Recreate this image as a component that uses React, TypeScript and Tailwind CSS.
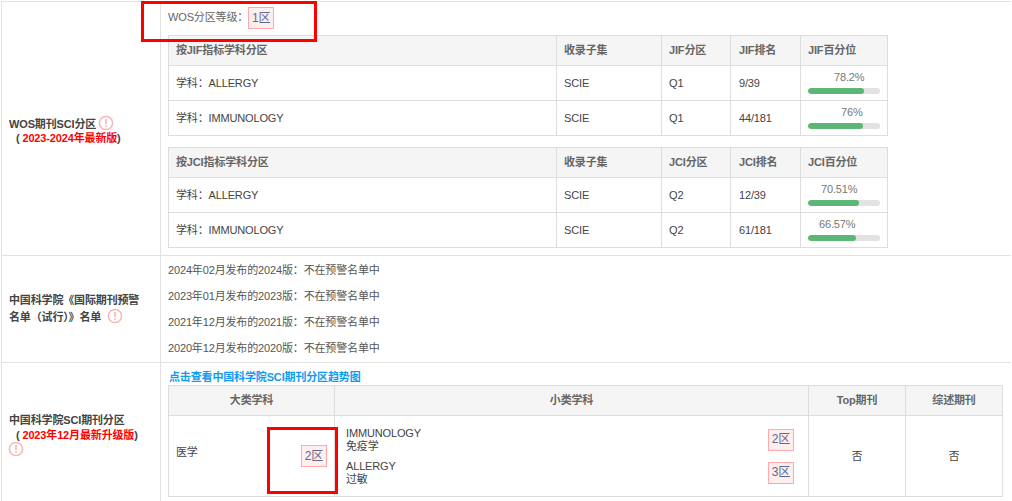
const font = "font-['Liberation_Sans','Noto_Sans_CJK_SC',sans-serif]";

function Alert({ className }: { className: string }) {
  return (
    <svg width="16" height="16" viewBox="0 0 16 16" className={className}>
      <circle cx="8" cy="8" r="6.6" fill="none" stroke="#fbb4b4" strokeWidth="1.5" />
      <rect x="7.2" y="4" width="1.6" height="5.2" fill="#fbb4b4" />
      <rect x="7.2" y="10.2" width="1.6" height="1.6" fill="#fbb4b4" />
    </svg>
  );
}

function Badge({ children }: { children: string }) {
  return (
    <span className="inline-flex items-center justify-center w-[26px] h-[22px] bg-[#ffeeee] border border-[#ffaaaa] text-[12px] text-[#5a6a90]">
      {children}
    </span>
  );
}

function Pct({ value, label, ml }: { value: number; label: string; ml: string }) {
  return (
    <div className="w-[72px] pb-[2px]">
      <div className="text-[11px] leading-[12px] text-[#777]" style={{ marginLeft: ml }}>{label}</div>
      <div className="h-[6px] mt-[5px] rounded-full bg-[#e2e2e2] overflow-hidden">
        <div className="h-full rounded-full bg-[#5cb675]" style={{ width: `${value}%` }} />
      </div>
    </div>
  );
}

const th7 = "border border-[#dddddd] bg-[#f5f5f5] text-[#666] font-bold text-[11px] text-left pl-[7px]";
const th8 = "border border-[#dddddd] bg-[#f5f5f5] text-[#666] font-bold text-[11px] text-left pl-[8px]";
const td7 = "border border-[#dddddd] text-[#444] text-[11px] pl-[7px]";
const td8 = "border border-[#dddddd] text-[#444] text-[11px] pl-[8px]";

function JTable({ kind, rows }: {
  kind: string;
  rows: { sub: string; q: string; rank: string; v: number; label: string; ml: string }[];
}) {
  return (
    <table className="w-[719px] table-fixed border-collapse">
      <colgroup>
        <col className="w-[388px]" />
        <col className="w-[105px]" />
        <col className="w-[69px]" />
        <col className="w-[70px]" />
        <col className="w-[87px]" />
      </colgroup>
      <thead>
        <tr className="h-[30px]">
          <th className={th7}>按{kind}指标学科分区</th>
          <th className={th7}>收录子集</th>
          <th className={th7}>{kind}分区</th>
          <th className={th8}>{kind}排名</th>
          <th className={th7}>{kind}百分位</th>
        </tr>
      </thead>
      <tbody>
        {rows.map((r) => (
          <tr key={r.sub} className="h-[35px]">
            <td className={td7}>学科：{r.sub}</td>
            <td className={td7}>SCIE</td>
            <td className={td7}>{r.q}</td>
            <td className={td8}>{r.rank}</td>
            <td className={td7}><Pct value={r.v} label={r.label} ml={r.ml} /></td>
          </tr>
        ))}
      </tbody>
    </table>
  );
}

const leftCell = "border border-[#e2e2e2] align-middle pl-[7px] pr-[18px] text-[11px] leading-[15px] font-bold text-[#444]";
const rightCell = "border border-r-0 border-[#e2e2e2] align-top";
const cth = "border border-[#dddddd] bg-[#f5f5f5] text-[#666] font-bold text-[11px] text-center";

export default function App() {
  return (
    <div className={`relative h-[501px] w-[1012px] overflow-hidden bg-white tracking-[-0.15px] ${font}`}>
      <table className="ml-[1px] mt-[1px] w-[1009px] table-fixed border-collapse">
        <colgroup>
          <col className="w-[159px]" />
          <col className="w-[850px]" />
        </colgroup>
        <tbody>
          <tr className="h-[254px]">
            <td className={leftCell}>
              <div className="pt-[3px]">WOS期刊SCI分区<Alert className="inline-block align-[-3px] ml-[2px]" /></div>
              <div className="pl-[7px] leading-[13px]">( <span className="text-[#ff0000]">2023-2024年最新版</span>)</div>
            </td>
            <td className={`${rightCell} pl-[7px]`}>
              <div className="flex items-center h-[33px] text-[11px] text-[#666] pb-[2px]">
                WOS分区等级：<Badge>1区</Badge>
              </div>
              <JTable
                kind="JIF"
                rows={[
                  { sub: "ALLERGY", q: "Q1", rank: "9/39", v: 78.2, label: "78.2%", ml: "26px" },
                  { sub: "IMMUNOLOGY", q: "Q1", rank: "44/181", v: 76, label: "76%", ml: "33px" },
                ]}
              />
              <div className="h-[11px]" />
              <JTable
                kind="JCI"
                rows={[
                  { sub: "ALLERGY", q: "Q2", rank: "12/39", v: 70.51, label: "70.51%", ml: "13px" },
                  { sub: "IMMUNOLOGY", q: "Q2", rank: "61/181", v: 66.57, label: "66.57%", ml: "11px" },
                ]}
              />
            </td>
          </tr>
          <tr className="h-[107px]">
            <td className={leftCell}>
              中国科学院《国际期刊预警名单（试行）》名单<Alert className="inline-block align-[-3px] ml-[6px]" />
            </td>
            <td className={`${rightCell} pl-[7px] pt-[1px] text-[11px] text-[#555]`}>
              <div className="flex flex-col">
                <div className="h-[26px] leading-[26px]">2024年02月发布的2024版：不在预警名单中</div>
                <div className="h-[26px] leading-[26px]">2023年01月发布的2023版：不在预警名单中</div>
                <div className="h-[26px] leading-[26px]">2021年12月发布的2021版：不在预警名单中</div>
                <div className="h-[26px] leading-[26px]">2020年12月发布的2020版：不在预警名单中</div>
              </div>
            </td>
          </tr>
          <tr className="h-[140px]">
            <td className={leftCell}>
              <div className="pt-[6px]">中国科学院SCI期刊分区</div>
              <div className="pl-[7px]">( <span className="text-[#ff0000]">2023年12月最新升级版</span>)</div>
              <Alert className="block -ml-[1px] -mt-[2px] mb-[2px]" />
            </td>
            <td className={`${rightCell} pl-[7px] pt-[7px]`}>
              <div className="ml-[1px] mb-[1px] text-[11px] leading-[14px] font-bold text-[#0d9bf2]">点击查看中国科学院SCI期刊分区趋势图</div>
              <table className="w-[834px] table-fixed border-collapse">
                <colgroup>
                  <col className="w-[166px]" />
                  <col className="w-[474px]" />
                  <col className="w-[97px]" />
                  <col className="w-[97px]" />
                </colgroup>
                <thead>
                  <tr className="h-[30px]">
                    <th className={cth}>大类学科</th>
                    <th className={cth}>小类学科</th>
                    <th className={cth}>Top期刊</th>
                    <th className={cth}>综述期刊</th>
                  </tr>
                </thead>
                <tbody>
                  <tr className="h-[81px]">
                    <td className="border border-[#dddddd] pl-[7px] pr-[7px] text-[11px] text-[#444]">
                      <div className="flex items-center justify-between">
                        <span className="mb-[8px]">医学</span>
                        <Badge>2区</Badge>
                      </div>
                    </td>
                    <td className="border border-[#dddddd] pl-[11px] pr-[14px] text-[11px] leading-[13px] text-[#444]">
                      <div className="flex items-center justify-between">
                        <div>IMMUNOLOGY<br />免疫学</div>
                        <Badge>2区</Badge>
                      </div>
                      <div className="flex items-center justify-between mt-[7px]">
                        <div>ALLERGY<br />过敏</div>
                        <Badge>3区</Badge>
                      </div>
                    </td>
                    <td className="border border-[#dddddd] text-center text-[11px] text-[#444]">否</td>
                    <td className="border border-[#dddddd] text-center text-[11px] text-[#444]">否</td>
                  </tr>
                </tbody>
              </table>
            </td>
          </tr>
        </tbody>
      </table>
      <div className="absolute left-[141px] top-[1px] w-[176px] h-[41px] border-[3px] border-[#ff0000]" />
      <div className="absolute left-[267px] top-[427px] w-[71px] h-[67px] border-[3px] border-[#ff0000]" />
    </div>
  );
}
